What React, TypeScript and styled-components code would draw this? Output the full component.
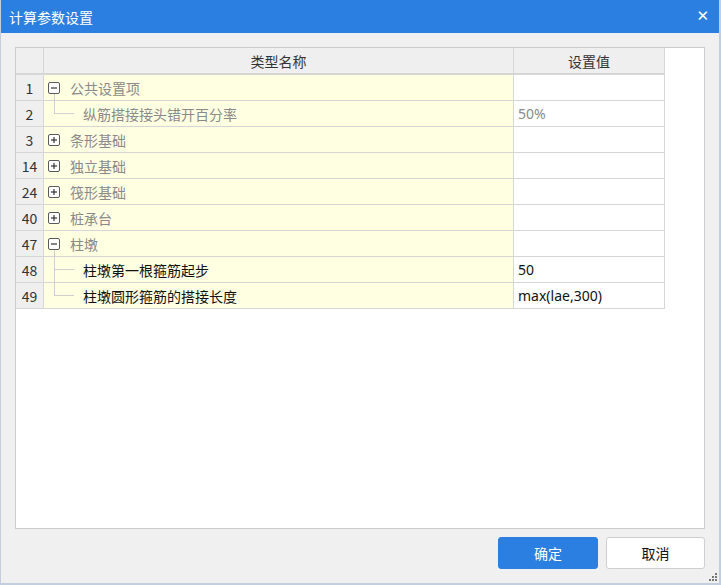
import styled, { createGlobalStyle } from "styled-components";

const GlobalStyle = createGlobalStyle`
  html, body {
    margin: 0;
    padding: 0;
    background: #f0f0f0;
  }
  body {
    font-family: "Noto Sans CJK SC", "Noto Sans", sans-serif;
  }
`;

const Window = styled.div`
  width: 721px;
  height: 585px;
  box-sizing: border-box;
  display: flex;
  flex-direction: column;
  background: #f0f0f0;
  border-left: 1px solid #c3cedc;
  border-right: 2px solid #c3cedc;
  border-bottom: 2px solid #c3cedc;
  position: relative;
`;

const TitleBar = styled.div`
  height: 33px;
  flex: none;
  background: #2b7fe0;
  display: flex;
  align-items: center;
  justify-content: space-between;
  padding: 0 10px 0 8px;
  color: #fff;
  font-size: 14px;
`;

const CloseButton = styled.span`
  font-family: "DejaVu Sans", sans-serif;
  font-size: 15px;
  line-height: 1;
`;

const Body = styled.div`
  flex: 1;
  display: flex;
  flex-direction: column;
  padding: 14px 14px 0 14px;
`;

const GridFrame = styled.div`
  height: 482px;
  box-sizing: border-box;
  background: #fff;
  border: 1px solid #cacaca;
  overflow: hidden;
`;

const Table = styled.table`
  border-collapse: collapse;
  table-layout: fixed;
  width: 646px;
  font-size: 14px;
`;

const HeadCell = styled.th<{ $w: number }>`
  width: ${(p) => p.$w}px;
  height: 25px;
  padding: 0;
  background: #efefef;
  border: 1px solid #d6d6d6;
  border-top: none;
  border-bottom: 2px solid #d6d6d6;
  font-weight: normal;
  color: #333;
  text-align: center;
  &:first-child {
    border-left: none;
  }
`;

const NumCell = styled.td`
  height: 25px;
  padding: 0;
  background: #efefef;
  border: 1px solid #d6d6d6;
  border-left: none;
  color: #333;
  text-align: center;
`;

const NameCell = styled.td`
  padding: 0;
  background: #ffffe1;
  border: 1px solid #d6d6d6;
  position: relative;
`;

const ValueCell = styled.td<{ $muted: boolean }>`
  padding: 0 0 0 4px;
  background: #fff;
  border: 1px solid #d6d6d6;
  color: ${(p) => (p.$muted ? "#8a8a8a" : "#111")};
  font-family: "Noto Sans", "Noto Sans CJK SC", sans-serif;
`;

const NameInner = styled.div<{ $level: number }>`
  display: flex;
  align-items: center;
  height: 25px;
  padding-left: ${(p) => (p.$level === 0 ? 4 : 39)}px;
  gap: 10px;
`;

const Toggle = styled.span`
  width: 10px;
  height: 10px;
  border: 1px solid #5a5a5a;
  border-radius: 2px;
  background: #fff;
  display: flex;
  align-items: center;
  justify-content: center;
  flex: none;
  position: relative;
  z-index: 1;
`;

const Label = styled.span<{ $muted: boolean }>`
  color: ${(p) => (p.$muted ? "#8a8a8a" : "#111")};
`;

const VLine = styled.span<{ $last: boolean }>`
  position: absolute;
  left: 10px;
  top: -1px;
  height: ${(p) => (p.$last ? "13px" : "calc(100% + 2px)")};
  border-left: 1px solid #cfcfcf;
`;

const Tail = styled.span`
  position: absolute;
  left: 10px;
  top: 18px;
  bottom: -1px;
  border-left: 1px solid #cfcfcf;
`;

const HLine = styled.span`
  position: absolute;
  left: 10px;
  top: 12px;
  width: 20px;
  border-top: 1px solid #cfcfcf;
`;

const Footer = styled.div`
  display: flex;
  justify-content: flex-end;
  gap: 8px;
  padding-top: 8px;
`;

const Button = styled.button<{ $primary?: boolean }>`
  width: ${(p) => (p.$primary ? 100 : 99)}px;
  height: 32px;
  border-radius: 3px;
  font-family: "Noto Sans CJK SC", sans-serif;
  font-size: 14px;
  background: ${(p) => (p.$primary ? "#2b7fe0" : "#fff")};
  color: ${(p) => (p.$primary ? "#fff" : "#111")};
  border: 1px solid ${(p) => (p.$primary ? "#2b7fe0" : "#cfcfcf")};
`;

const Grip = styled.svg`
  position: absolute;
  right: 1px;
  bottom: 1px;
`;

type Row = {
  n: number;
  name: string;
  level: 0 | 1;
  open?: boolean;
  value?: string;
  muted: boolean;
  last?: boolean;
};

const rows: Row[] = [
  { n: 1, name: "公共设置项", level: 0, open: true, muted: true },
  { n: 2, name: "纵筋搭接接头错开百分率", level: 1, value: "50%", muted: true, last: true },
  { n: 3, name: "条形基础", level: 0, open: false, muted: true },
  { n: 14, name: "独立基础", level: 0, open: false, muted: true },
  { n: 24, name: "筏形基础", level: 0, open: false, muted: true },
  { n: 40, name: "桩承台", level: 0, open: false, muted: true },
  { n: 47, name: "柱墩", level: 0, open: true, muted: true },
  { n: 48, name: "柱墩第一根箍筋起步", level: 1, value: "50", muted: false },
  { n: 49, name: "柱墩圆形箍筋的搭接长度", level: 1, value: "max(lae,300)", muted: false, last: true },
];

function ToggleBox({ open }: { open: boolean }) {
  return (
    <Toggle>
      <svg width="8" height="8" viewBox="0 0 8 8">
        <line x1="1" y1="4" x2="7" y2="4" stroke="#333" strokeWidth="1.2" />
        {!open && <line x1="4" y1="1" x2="4" y2="7" stroke="#333" strokeWidth="1.2" />}
      </svg>
    </Toggle>
  );
}

export default function App() {
  return (
    <>
      <GlobalStyle />
      <Window>
        <TitleBar>
          <span>计算参数设置</span>
          <CloseButton>✕</CloseButton>
        </TitleBar>
        <Body>
          <GridFrame>
            <Table>
              <thead>
                <tr>
                  <HeadCell $w={27}></HeadCell>
                  <HeadCell $w={469}>类型名称</HeadCell>
                  <HeadCell $w={150}>设置值</HeadCell>
                </tr>
              </thead>
              <tbody>
                {rows.map((r) => (
                  <tr key={r.n}>
                    <NumCell>{r.n}</NumCell>
                    <NameCell>
                      {r.level === 1 && (
                        <>
                          <VLine $last={!!r.last} />
                          <HLine />
                        </>
                      )}
                      {r.level === 0 && r.open && <Tail />}
                      <NameInner $level={r.level}>
                        {r.level === 0 && <ToggleBox open={!!r.open} />}
                        <Label $muted={r.muted}>{r.name}</Label>
                      </NameInner>
                    </NameCell>
                    <ValueCell $muted={r.muted}>{r.value ?? ""}</ValueCell>
                  </tr>
                ))}
              </tbody>
            </Table>
          </GridFrame>
          <Footer>
            <Button $primary>确定</Button>
            <Button>取消</Button>
          </Footer>
        </Body>
        <Grip width="10" height="10" viewBox="0 0 10 10">
          <rect x="7" y="1" width="2" height="2" fill="#777" />
          <rect x="4" y="4" width="2" height="2" fill="#777" />
          <rect x="7" y="4" width="2" height="2" fill="#777" />
          <rect x="1" y="7" width="2" height="2" fill="#777" />
          <rect x="4" y="7" width="2" height="2" fill="#777" />
          <rect x="7" y="7" width="2" height="2" fill="#777" />
        </Grip>
      </Window>
    </>
  );
}
